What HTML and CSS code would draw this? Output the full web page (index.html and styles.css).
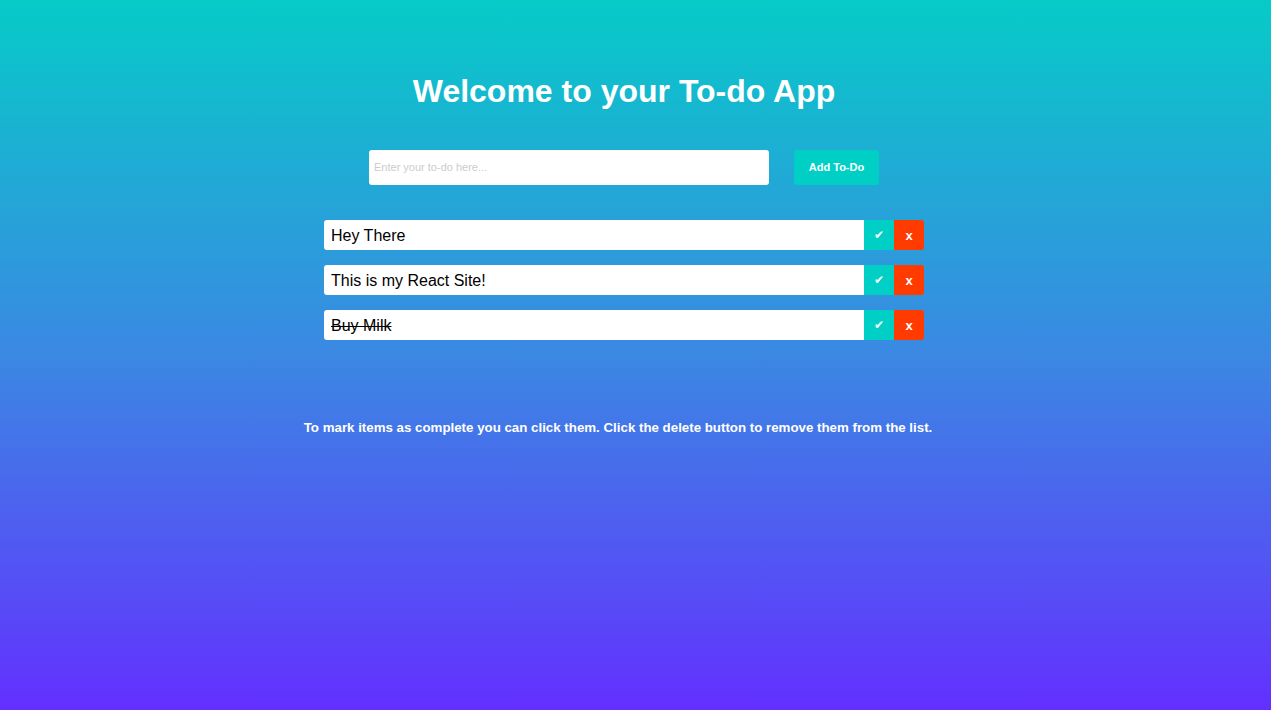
FILE: index.html
```html
<!DOCTYPE html>
<html>
<head>
<meta charset="utf-8">
<link rel="stylesheet" href="styles.css">
</head>
<body>
<div class="app">
  <h1 class="title">Welcome to your To-do App</h1>
  <div class="form">
    <input class="todo-input" type="text" placeholder="Enter your to-do here...">
    <button class="add-btn">Add To-Do</button>
  </div>
  <ul class="list">
    <li class="item"><span class="text">Hey There</span><button class="check">✔</button><button class="del">x</button></li>
    <li class="item"><span class="text">This is my React Site!</span><button class="check">✔</button><button class="del">x</button></li>
    <li class="item"><span class="text done">Buy Milk</span><button class="check">✔</button><button class="del">x</button></li>
  </ul>
  <p class="note">To mark items as complete you can click them. Click the delete button to remove them from the list.</p>
</div>
</body>
</html>
```
FILE: styles.css
```css
html, body {
  margin: 0;
  padding: 0;
  height: 100%;
}
body {
  background: linear-gradient(to bottom, #06cbc8 0%, #3b88e3 50%, #6330ff 100%);
  font-family: "Liberation Sans", Arial, sans-serif;
  color: #fff;
}
.app {
  width: 1248px;
  display: flex;
  flex-direction: column;
  align-items: center;
  padding-top: 72px;
}
.title {
  margin: 0;
  font-size: 32px;
  font-weight: bold;
  line-height: 38px;
}
.form {
  display: flex;
  gap: 25px;
  margin-top: 40px;
}
.todo-input {
  width: 400px;
  height: 35px;
  box-sizing: border-box;
  border: none;
  border-radius: 3px;
  padding: 0 5px 1px;
  font-family: "Liberation Sans", Arial, sans-serif;
  font-size: 11px;
  outline: none;
}
.todo-input::placeholder {
  color: #cccccc;
}
.add-btn {
  width: 85px;
  height: 35px;
  border: none;
  border-radius: 3px;
  background: #00cfc6;
  color: #fff;
  font-family: "Liberation Sans", Arial, sans-serif;
  font-size: 11px;
  font-weight: bold;
  padding: 0 0 1px;
}
.list {
  list-style: none;
  margin: 35px 0 0;
  padding: 0;
  display: flex;
  flex-direction: column;
  gap: 15px;
}
.item {
  display: flex;
  width: 600px;
  height: 30px;
}
.text {
  flex: 1;
  background: #fff;
  color: #000;
  font-size: 16px;
  line-height: 30px;
  padding: 1px 0 0 7px;
  box-sizing: border-box;
  border-radius: 3px 0 0 3px;
}
.done {
  text-decoration: line-through;
}
.check, .del {
  width: 30px;
  height: 30px;
  border: none;
  padding: 0;
  color: #fff;
  font-family: "DejaVu Sans", "Liberation Sans", sans-serif;
  font-weight: bold;
  font-size: 12px;
}
.check {
  background: #00cfc6;
}
.del {
  background: #ff3b00;
  border-radius: 0 3px 3px 0;
  font-family: "Liberation Sans", Arial, sans-serif;
  font-size: 13px;
}
.note {
  margin: 80px 12px 0 0;
  font-size: 13.3px;
  font-weight: bold;
}
```
